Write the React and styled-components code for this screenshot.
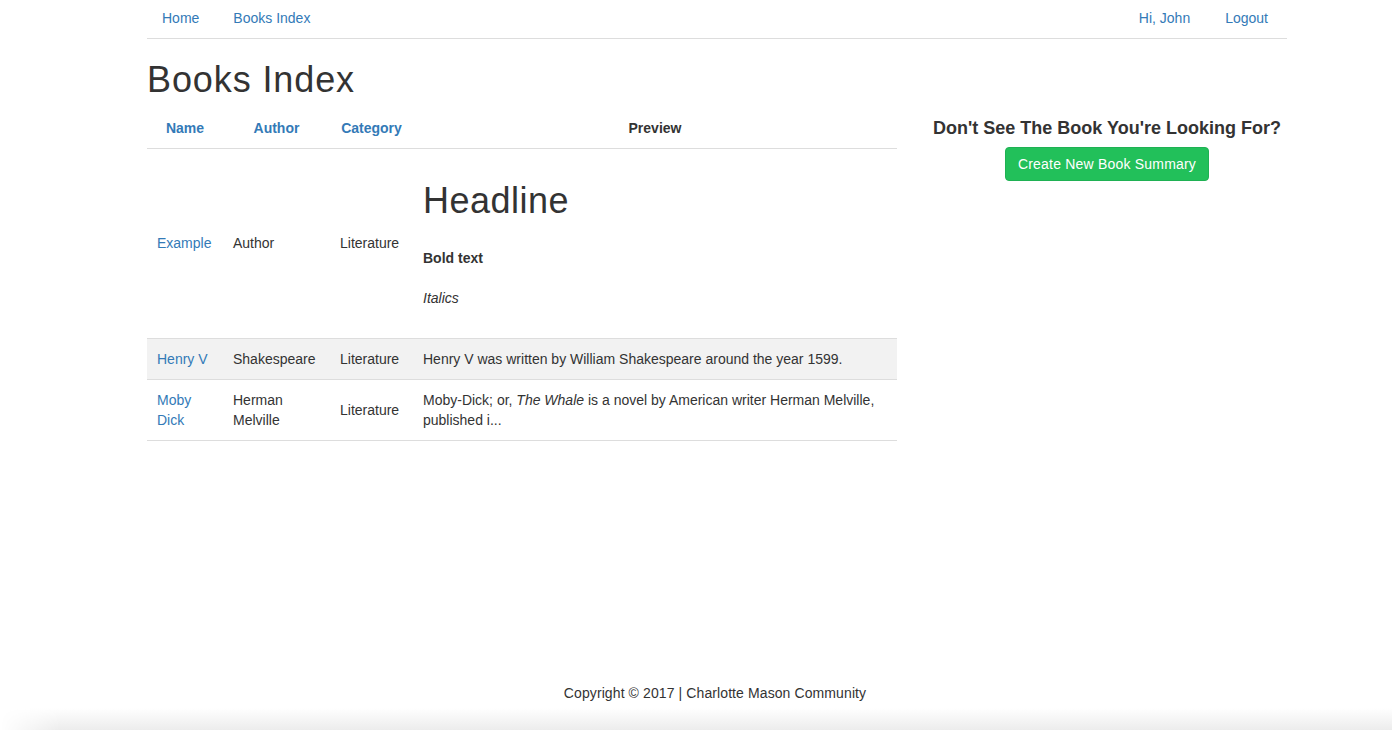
import React from 'react';
import styled, { createGlobalStyle } from 'styled-components';

const GlobalStyle = createGlobalStyle`
  html, body {
    margin: 0;
    padding: 0;
    background: #fff;
  }
  body {
    font-family: "Liberation Sans", Arial, sans-serif;
    font-size: 14px;
    line-height: 20px;
    color: #333;
  }
`;

const Page = styled.div`
  min-height: 730px;
  display: flex;
  flex-direction: column;
`;

const Container = styled.div`
  width: 1140px;
  margin-left: 147px;
`;

const Nav = styled.nav`
  display: flex;
  justify-content: space-between;
  border-bottom: 1px solid #ddd;
  height: 38px;
`;

const NavGroup = styled.ul`
  display: flex;
  gap: ${(p) => (p.$right ? '5px' : '4px')};
  list-style: none;
  margin: 0;
  padding: 0 ${(p) => (p.$right ? '4px' : '0')} 0 0;
`;

const NavLink = styled.a`
  display: block;
  padding: 8px 15px 10px 15px;
  color: #337ab7;
  text-decoration: none;
  cursor: pointer;
`;

const Title = styled.h1`
  font-size: 36px;
  font-weight: 500;
  line-height: 1.1;
  letter-spacing: 0.9px;
  margin: 21px 0 9px;
`;

const Row = styled.div`
  display: grid;
  grid-template-columns: 750px 360px;
  column-gap: 30px;
`;

const Table = styled.table`
  width: 100%;
  border-collapse: collapse;
  table-layout: fixed;
`;

const Th = styled.th`
  padding: 9px 10px 10px;
  font-weight: bold;
  text-align: center;
  border-bottom: 1px solid #ddd;
  color: ${(p) => (p.$link ? '#337ab7' : '#333')};
`;

const Tr = styled.tr`
  background: ${(p) => (p.$shaded ? '#f2f2f2' : 'transparent')};
  border-bottom: 1px solid #ddd;
`;

const Td = styled.td`
  padding: 10px 8px 10px 10px;
  vertical-align: middle;
  color: ${(p) => (p.$link ? '#337ab7' : '#333')};
`;

const PreviewHeadline = styled.h1`
  font-size: 36px;
  font-weight: 500;
  line-height: 1.1;
  letter-spacing: 0.5px;
  margin: 22px 0 28px;
`;

const PreviewPara = styled.p`
  margin: 0 0 20px;
  &:last-child {
    margin-bottom: 20px;
  }
`;

const Side = styled.aside`
  display: flex;
  flex-direction: column;
  align-items: center;
  padding-top: 8px;
`;

const SideHeading = styled.h4`
  font-size: 18px;
  font-weight: bold;
  line-height: 20px;
  margin: 1px 0 9px;
`;

const CreateButton = styled.button`
  font-family: inherit;
  font-size: 14px;
  line-height: 20px;
  color: #fff;
  background: #22c05a;
  border: 1px solid #1fb153;
  border-radius: 4px;
  padding: 6px 12px;
  letter-spacing: 0.2px;
  cursor: pointer;
`;

const Spacer = styled.div`
  flex: 1;
`;

const Footer = styled.footer`
  text-align: center;
  padding-left: 38px;
  padding-bottom: 5px;
  letter-spacing: 0.1px;
`;

const FooterShade = styled.div`
  height: 22px;
  background: linear-gradient(to bottom, #fff, #ececec);
  -webkit-mask-image: linear-gradient(to right, transparent 0, #000 60px);
  mask-image: linear-gradient(to right, transparent 0, #000 60px);
`;

const books = [
  { name: 'Henry V', author: 'Shakespeare', category: 'Literature', preview: <>Henry V was written by William Shakespeare around the year 1599.</> },
  { name: 'Moby Dick', author: 'Herman Melville', category: 'Literature', preview: <>Moby-Dick; or, <em>The Whale</em> is a novel by American writer Herman Melville, published i...</> },
];

export default function App() {
  return (
    <Page>
      <GlobalStyle />
      <Container>
        <Nav>
          <NavGroup>
            <li><NavLink>Home</NavLink></li>
            <li><NavLink>Books Index</NavLink></li>
          </NavGroup>
          <NavGroup $right>
            <li><NavLink>Hi, John</NavLink></li>
            <li><NavLink>Logout</NavLink></li>
          </NavGroup>
        </Nav>
        <Title>Books Index</Title>
        <Row>
          <Table>
            <colgroup>
              <col style={{ width: 76 }} />
              <col style={{ width: 107 }} />
              <col style={{ width: 83 }} />
              <col />
            </colgroup>
            <thead>
              <tr>
                <Th $link>Name</Th>
                <Th $link>Author</Th>
                <Th $link>Category</Th>
                <Th>Preview</Th>
              </tr>
            </thead>
            <tbody>
              <Tr>
                <Td $link>Example</Td>
                <Td>Author</Td>
                <Td>Literature</Td>
                <Td>
                  <PreviewHeadline>Headline</PreviewHeadline>
                  <PreviewPara><strong>Bold text</strong></PreviewPara>
                  <PreviewPara><em>Italics</em></PreviewPara>
                </Td>
              </Tr>
              {books.map((b, i) => (
                <Tr key={b.name} $shaded={i === 0}>
                  <Td $link>{b.name}</Td>
                  <Td>{b.author}</Td>
                  <Td>{b.category}</Td>
                  <Td>{b.preview}</Td>
                </Tr>
              ))}
            </tbody>
          </Table>
          <Side>
            <SideHeading>Don't See The Book You're Looking For?</SideHeading>
            <CreateButton>Create New Book Summary</CreateButton>
          </Side>
        </Row>
      </Container>
      <Spacer />
      <Footer>Copyright © 2017 | Charlotte Mason Community</Footer>
      <FooterShade />
    </Page>
  );
}
